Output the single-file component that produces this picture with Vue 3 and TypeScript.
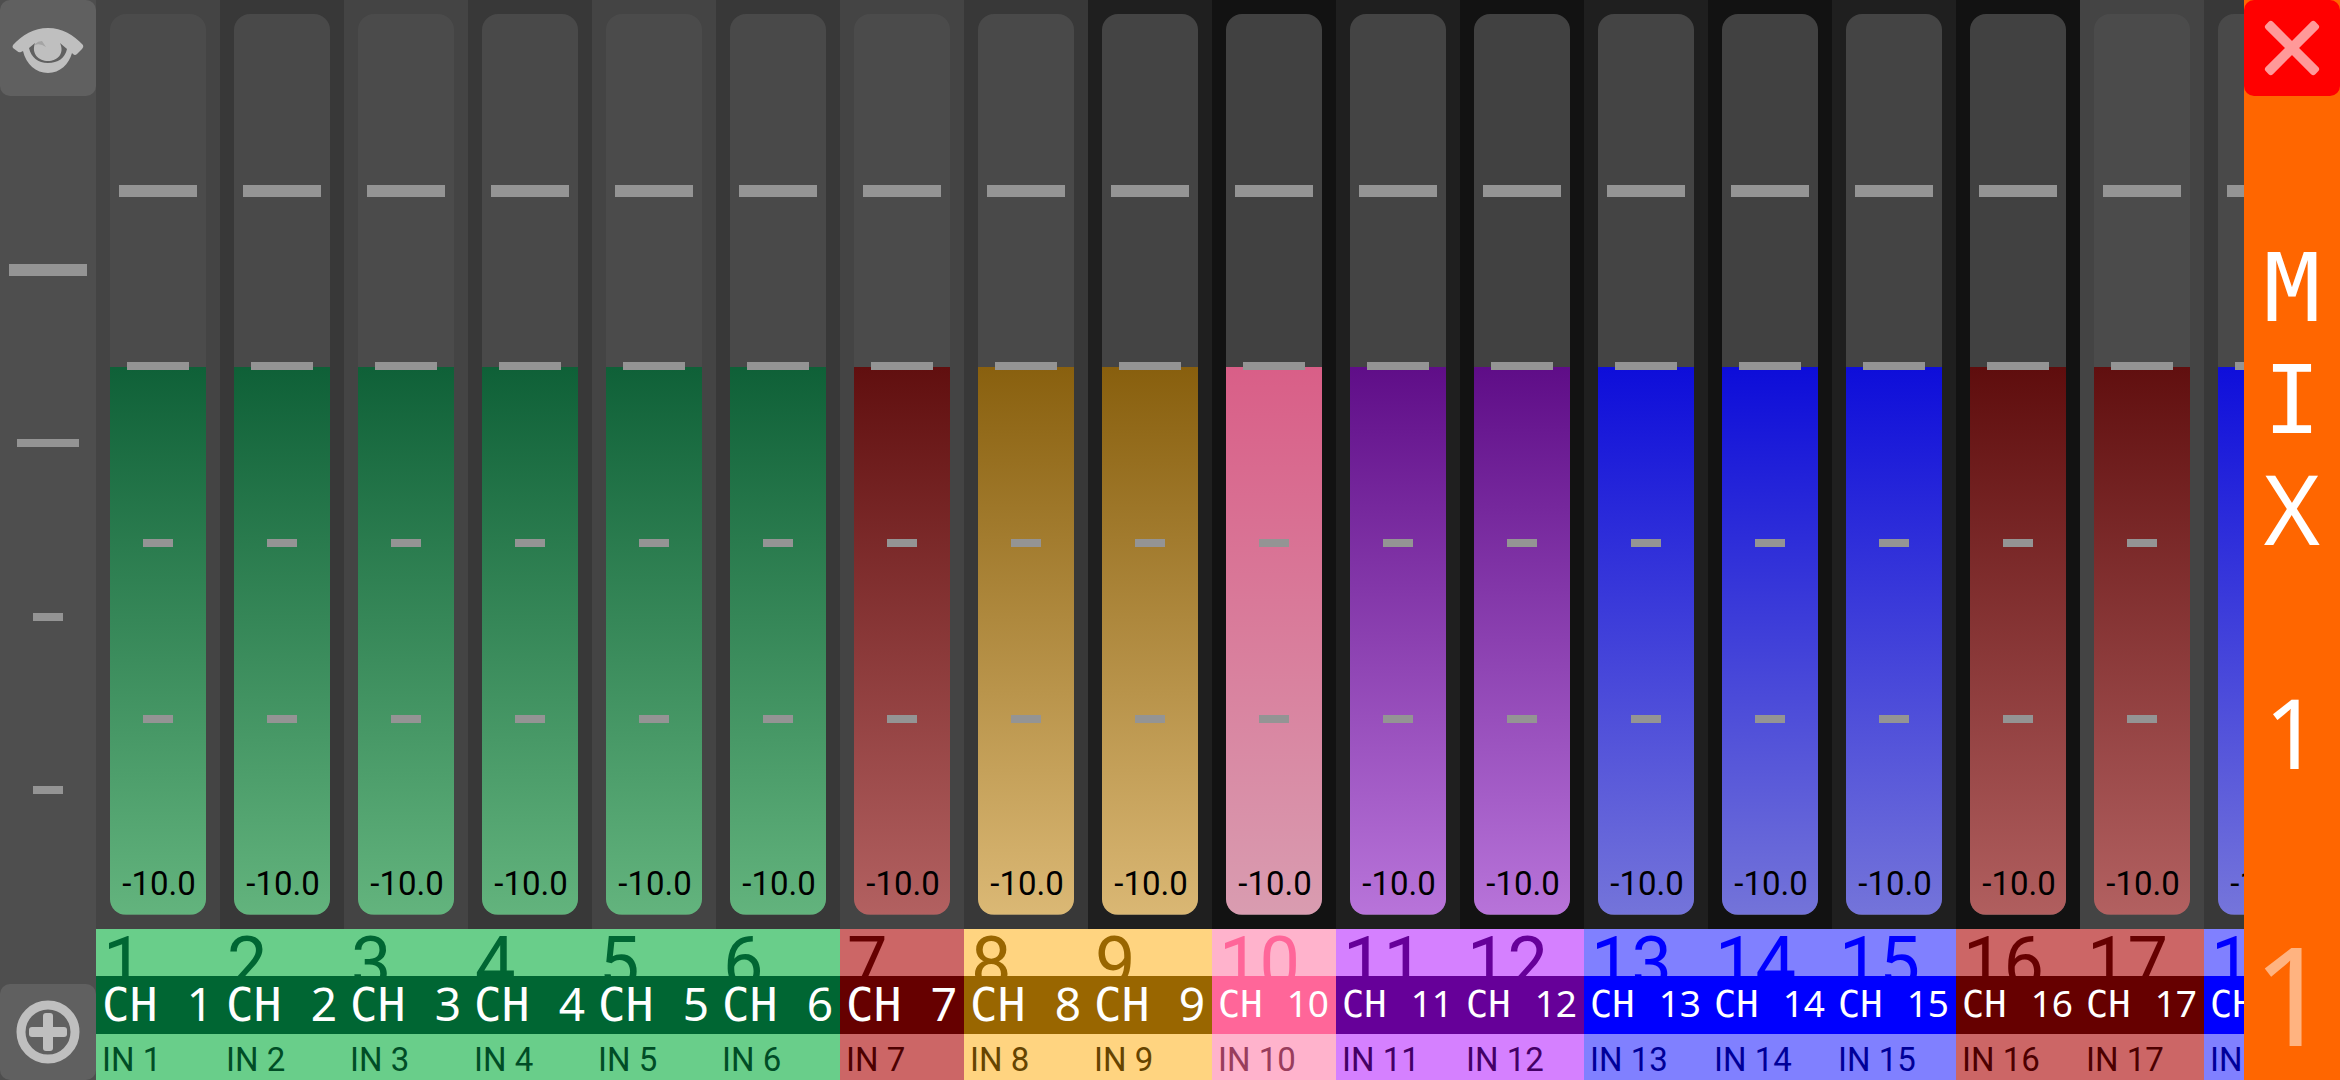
<script setup lang="ts">
import { reactive } from 'vue'

interface Channel {
  id: number
  hue: string
  shade: string
  level: number
}

interface Glyph {
  char: string
  mono: boolean
}

const MIN_DB = -41
const MAX_DB = 10

const hues: string[] = [
  'green', 'green', 'green', 'green', 'green', 'green',
  'red', 'gold', 'gold', 'pink', 'purple', 'purple',
  'blue', 'blue', 'blue', 'red', 'red', 'blue',
]

/* Banks of eight alternate between a light and a dark pair of backgrounds. */
function shadeOf(id: number): string {
  const bank = Math.floor((id - 1) / 8) % 2 === 0 ? 'bank-a' : 'bank-b'
  return `${bank} ${id % 2 ? 'odd' : 'even'}`
}

const channels = reactive<Channel[]>(
  hues.map((hue, i) => ({ id: i + 1, hue, shade: shadeOf(i + 1), level: -10 })),
)

function fill(level: number): string {
  return `${((level - MIN_DB) / (MAX_DB - MIN_DB)) * 100}%`
}

const ticks: string[] = ['unity', 'ten', 'minor', 'low']

const mixName: Glyph[] = [
  { char: 'M', mono: true },
  { char: 'I', mono: true },
  { char: 'X', mono: false },
  { char: '\u00a0', mono: false },
  { char: '1', mono: false },
]
</script>

<template>
  <div class="mixer">
    <aside class="side">
      <button class="key" type="button" aria-label="View">
        <svg viewBox="0 0 96 96" aria-hidden="true">
          <path
            class="solid"
            fill-rule="evenodd"
            d="M13 45C22 35 34 28 48 28C62 28 74 35 83 45Q84 47 82 49L77 54Q75 56 73 54L72 53C69 64 60 73 48 73C36 73 26 64 23 51L21 52Q19 53 17 51L13 48Q12 47 13 45ZM29 48C31 57 38 63 48 63C58 63 65 58 67 49L60 43C65 54 57 61 48 61C39 61 31 54 35 43Z"
          />
          <path class="glint" d="M35 44Q38 41 42 41L46 47Q40 43 35 45Z" />
        </svg>
      </button>
      <div class="rail">
        <span v-for="t in ticks" :key="t" class="tick" :class="t"></span>
      </div>
      <button class="key" type="button" aria-label="Add">
        <svg viewBox="0 0 96 96" aria-hidden="true">
          <circle class="ring" cx="48" cy="48" r="27" />
          <rect class="solid" x="29" y="43" width="38" height="10" rx="3" />
          <rect class="solid" x="43" y="29" width="10" height="38" rx="3" />
        </svg>
      </button>
    </aside>

    <main class="channels">
      <section v-for="c in channels" :key="c.id" class="channel" :class="[c.hue, c.shade]">
        <div class="lane">
          <div class="track">
            <input
              :id="`fader-${c.id}`"
              v-model.number="c.level"
              class="fader"
              type="range"
              :min="MIN_DB"
              :max="MAX_DB"
              step="0.1"
              :style="{ backgroundSize: `100% ${fill(c.level)}` }"
            />
            <span v-for="t in ticks" :key="t" class="tick" :class="t"></span>
            <output class="level" :for="`fader-${c.id}`">{{ c.level.toFixed(1) }}</output>
          </div>
        </div>
        <div class="number">{{ c.id }}</div>
        <label class="name" :class="{ long: c.id > 9 }" :for="`fader-${c.id}`">
          <span class="prefix">CH</span> <span>{{ c.id }}</span>
        </label>
        <div class="input">IN {{ c.id }}</div>
      </section>
    </main>

    <aside class="side mix">
      <button class="key close" type="button" aria-label="Close">
        <svg viewBox="0 0 96 96" aria-hidden="true">
          <g class="cross" transform="rotate(45 48 48)">
            <rect x="13" y="43" width="70" height="10" rx="3" />
            <rect x="43" y="13" width="10" height="70" rx="3" />
          </g>
        </svg>
      </button>
      <h1 class="mix-name">
        <span v-for="(g, i) in mixName" :key="i" class="line"><span :class="{ mono: g.mono }">{{ g.char }}</span></span>
      </h1>
      <div class="mix-number">1</div>
    </aside>
  </div>
</template>

<style>
body {
  margin: 0;
  background: #111;
}
</style>

<style scoped>
.mixer {
  display: flex;
  height: 100vh;
  overflow: hidden;
  font-family: Roboto, sans-serif;
}

.side {
  flex: none;
  display: flex;
  flex-direction: column;
  width: 96px;
  background: #4e4e4e;
}

.key {
  flex: none;
  width: 96px;
  height: 96px;
  padding: 0;
  border: 0;
  border-radius: 10px;
  background: #606060;
}

.key svg {
  display: block;
}

.solid {
  fill: #bfbfbf;
}

.glint {
  fill: #a4a4a4;
}

.ring {
  fill: none;
  stroke: #bfbfbf;
  stroke-width: 9;
}

.rail {
  position: relative;
  flex: 1;
}

.tick {
  position: absolute;
  left: 50%;
  width: 30px;
  height: 8px;
  background: #949494;
  transform: translate(-50%, -50%);
  pointer-events: none;
}

.unity {
  top: 19.6%;
  width: 78px;
  height: 12px;
}

.ten {
  top: 39.1%;
  width: 62px;
}

.minor {
  top: 58.7%;
}

.low {
  top: 78.2%;
}

.channels {
  flex: 1;
  display: flex;
  min-width: 0;
  overflow: hidden;
}

.channel {
  flex: none;
  display: flex;
  flex-direction: column;
  width: 124px;
}

.lane {
  flex: 1;
  display: flex;
  min-height: 0;
  padding: 14px;
}

.bank-a.odd .lane {
  background: #444;
}

.bank-a.even .lane {
  background: #383838;
}

.bank-b.odd .lane {
  background: #1f1f1f;
}

.bank-b.even .lane {
  background: #121212;
}

.track {
  position: relative;
  flex: 1;
  display: flex;
  overflow: hidden;
  border-radius: 16px;
  background: rgba(78, 78, 78, 0.8);
}

.fader {
  flex: 1;
  min-width: 0;
  margin: 0;
  appearance: none;
  writing-mode: vertical-lr;
  direction: rtl;
  background: linear-gradient(var(--deep), var(--pale)) bottom / 100% 61% no-repeat;
  opacity: 0.8;
}

.fader::-webkit-slider-thumb {
  appearance: none;
  width: 96px;
  height: 8px;
  background: transparent;
}

.level {
  position: absolute;
  right: 0;
  bottom: 11px;
  left: 2px;
  font-size: 33px;
  line-height: 40px;
  text-align: center;
  color: #000;
  pointer-events: none;
}

.number {
  height: 47px;
  padding-left: 7px;
  overflow: hidden;
  font-size: 72px;
  line-height: 70px;
  color: var(--deep);
  background: var(--pale);
}

.name {
  display: flex;
  justify-content: space-between;
  align-items: baseline;
  height: 58px;
  padding: 0 7px 0 6px;
  font-family: "Noto Sans", sans-serif;
  font-size: 46px;
  line-height: 54px;
  color: #fff;
  background: var(--deep);
}

.name.long {
  font-size: 37px;
}

.prefix {
  font-family: "DejaVu Sans Mono", monospace;
}

.input {
  height: 40px;
  padding: 6px 0 0 6px;
  font-size: 33px;
  line-height: 40px;
  white-space: nowrap;
  color: var(--ink);
  background: var(--pale);
}

.green {
  --deep: #006633;
  --pale: #69ce8a;
  --ink: #004d26;
}

.red {
  --deep: #660000;
  --pale: #cc6666;
  --ink: #4d0000;
}

.gold {
  --deep: #996600;
  --pale: #ffd480;
  --ink: #664400;
}

.pink {
  --deep: #ff6699;
  --pale: #ffb3cc;
  --ink: #993d5c;
}

.purple {
  --deep: #660099;
  --pale: #d580ff;
  --ink: #440066;
}

.blue {
  --deep: #0000ff;
  --pale: #8080ff;
  --ink: #000099;
}

.mix {
  background: #ff6600;
}

.close {
  background: #ff0000;
}

.cross {
  fill: #ff9999;
}

.mix-name {
  margin: 0;
  padding-top: 132px;
  font-family: "Noto Sans", sans-serif;
  font-size: 96px;
  font-weight: 400;
  line-height: 112px;
  text-align: center;
  color: #fff;
}

.line {
  display: block;
  height: 112px;
}

.mono {
  font-family: "DejaVu Sans Mono", monospace;
  font-size: 94px;
  line-height: 1;
}

.mix-number {
  margin-top: auto;
  font-family: "Noto Sans", sans-serif;
  font-size: 138px;
  line-height: 176px;
  text-align: center;
  color: #ffb380;
}
</style>
